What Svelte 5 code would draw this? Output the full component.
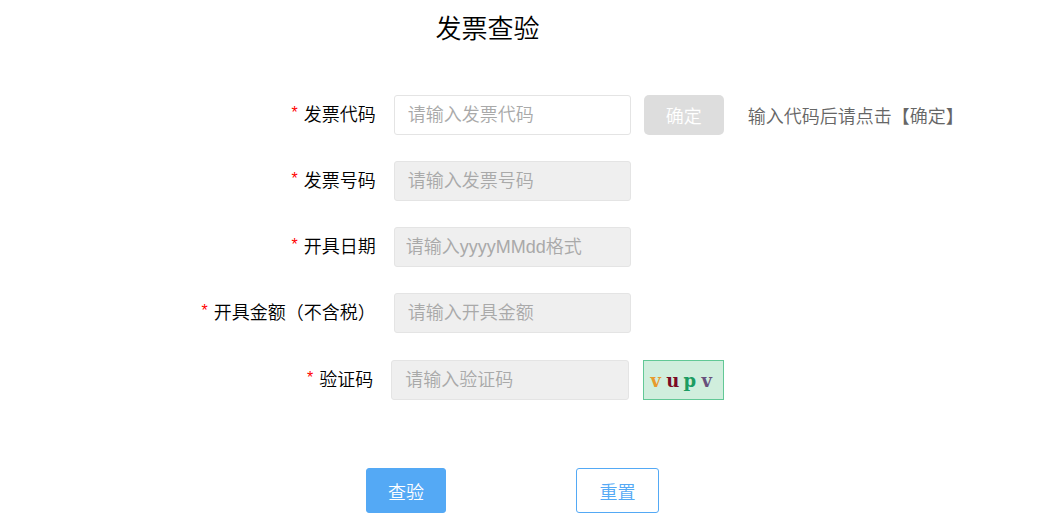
<script lang="ts">
	type Field = {
		id: string;
		label: string;
		placeholder: string;
		disabled?: boolean;
	};

	const fields: Field[] = [
		{ id: "code", label: "发票代码", placeholder: "请输入发票代码" },
		{ id: "number", label: "发票号码", placeholder: "请输入发票号码", disabled: true },
		{ id: "date", label: "开具日期", placeholder: "请输入yyyyMMdd格式", disabled: true },
		{ id: "amount", label: "开具金额（不含税）", placeholder: "请输入开具金额", disabled: true },
		{ id: "captcha", label: "验证码", placeholder: "请输入验证码", disabled: true },
	];

	const captcha = [
		{ char: "v", color: "#e89a2c" },
		{ char: "u", color: "#7a0a24" },
		{ char: "p", color: "#1c9c62" },
		{ char: "v", color: "#68507c" },
	];

	let values = $state<Record<string, string>>({});

	function reset() {
		values = {};
	}
</script>

<main>
	<h1>发票查验</h1>

	<form onsubmit={(e) => e.preventDefault()}>
		{#each fields as { id, label, placeholder, disabled } (id)}
			<div class="row {id}">
				<label for={id}><span class="star">*</span>{label}</label>
				<input {id} type="text" {placeholder} {disabled} bind:value={values[id]} />
				{#if id === "code"}
					<button class="confirm" type="button" disabled>确定</button>
					<span class="hint">输入代码后请点击【确定】</span>
				{:else if id === "captcha"}
					<button class="captcha-image" type="button">
						{#each captcha as { char, color }}
							<span style:color>{char}</span>
						{/each}
					</button>
				{/if}
			</div>
		{/each}

		<div class="actions">
			<button class="submit" type="submit">查验</button>
			<button class="reset" type="button" onclick={reset}>重置</button>
		</div>
	</form>
</main>

<style>
	:global(body) {
		margin: 0;
		background: #fff;
	}

	main {
		padding-top: 9px;
		font-family: "Liberation Sans", "Noto Sans CJK SC", sans-serif;
		font-size: 18px;
		font-weight: 350;
		color: #000;
	}

	h1 {
		margin: 0 0 46px;
		padding-right: 69px;
		font-size: 26px;
		font-weight: 350;
		line-height: 40px;
		text-align: center;
	}

	input,
	button {
		box-sizing: border-box;
		margin: 0;
		font: inherit;
	}

	button {
		padding: 0;
		cursor: pointer;
	}

	.row {
		display: flex;
		align-items: center;
		margin-bottom: 26px;
		white-space: nowrap;
	}

	label {
		display: flex;
		justify-content: flex-end;
		flex: 0 0 36%;
		gap: 6px;
		box-sizing: border-box;
		margin-right: 18px;
		line-height: 40px;
	}

	.star {
		font-size: 16px;
		line-height: 36px;
		color: #f00;
	}

	input {
		width: 237px;
		height: 40px;
		padding: 0 13px;
		border: 1px solid #e4e4e4;
		border-radius: 3px;
		background: #fff;
		color: #333;
	}

	input:disabled {
		background: #efefef;
	}

	input::placeholder {
		color: #a9a9a9;
		opacity: 1;
	}

	.date input {
		padding: 0 11px;
	}

	.captcha {
		margin-top: 27px;
		margin-left: -4px;
	}

	.captcha input {
		width: 238px;
	}

	.confirm {
		width: 80px;
		height: 40px;
		margin-left: 13px;
		border: none;
		border-radius: 5px;
		background: #ddd;
		color: #fff;
		cursor: default;
	}

	.hint {
		margin-left: 24px;
		color: #666;
	}

	.captcha-image {
		display: flex;
		align-items: center;
		width: 81px;
		height: 40px;
		margin-left: 14px;
		padding: 0 3px;
		border: 1px solid #62c896;
		background: #d0eedd;
		font-family: "DejaVu Serif", serif;
		font-size: 18px;
		font-weight: 700;
	}

	.captcha-image span {
		width: 17px;
		text-align: center;
	}

	.actions {
		display: flex;
		justify-content: center;
		gap: 130px;
		margin-top: 68px;
		padding-right: 19px;
	}

	.submit,
	.reset {
		height: 45px;
		border: 1px solid #54a9f5;
		border-radius: 3px;
	}

	.submit {
		width: 80px;
		background: #54a9f5;
		color: #fff;
	}

	.reset {
		width: 83px;
		background: #fff;
		color: #54a9f5;
	}
</style>
